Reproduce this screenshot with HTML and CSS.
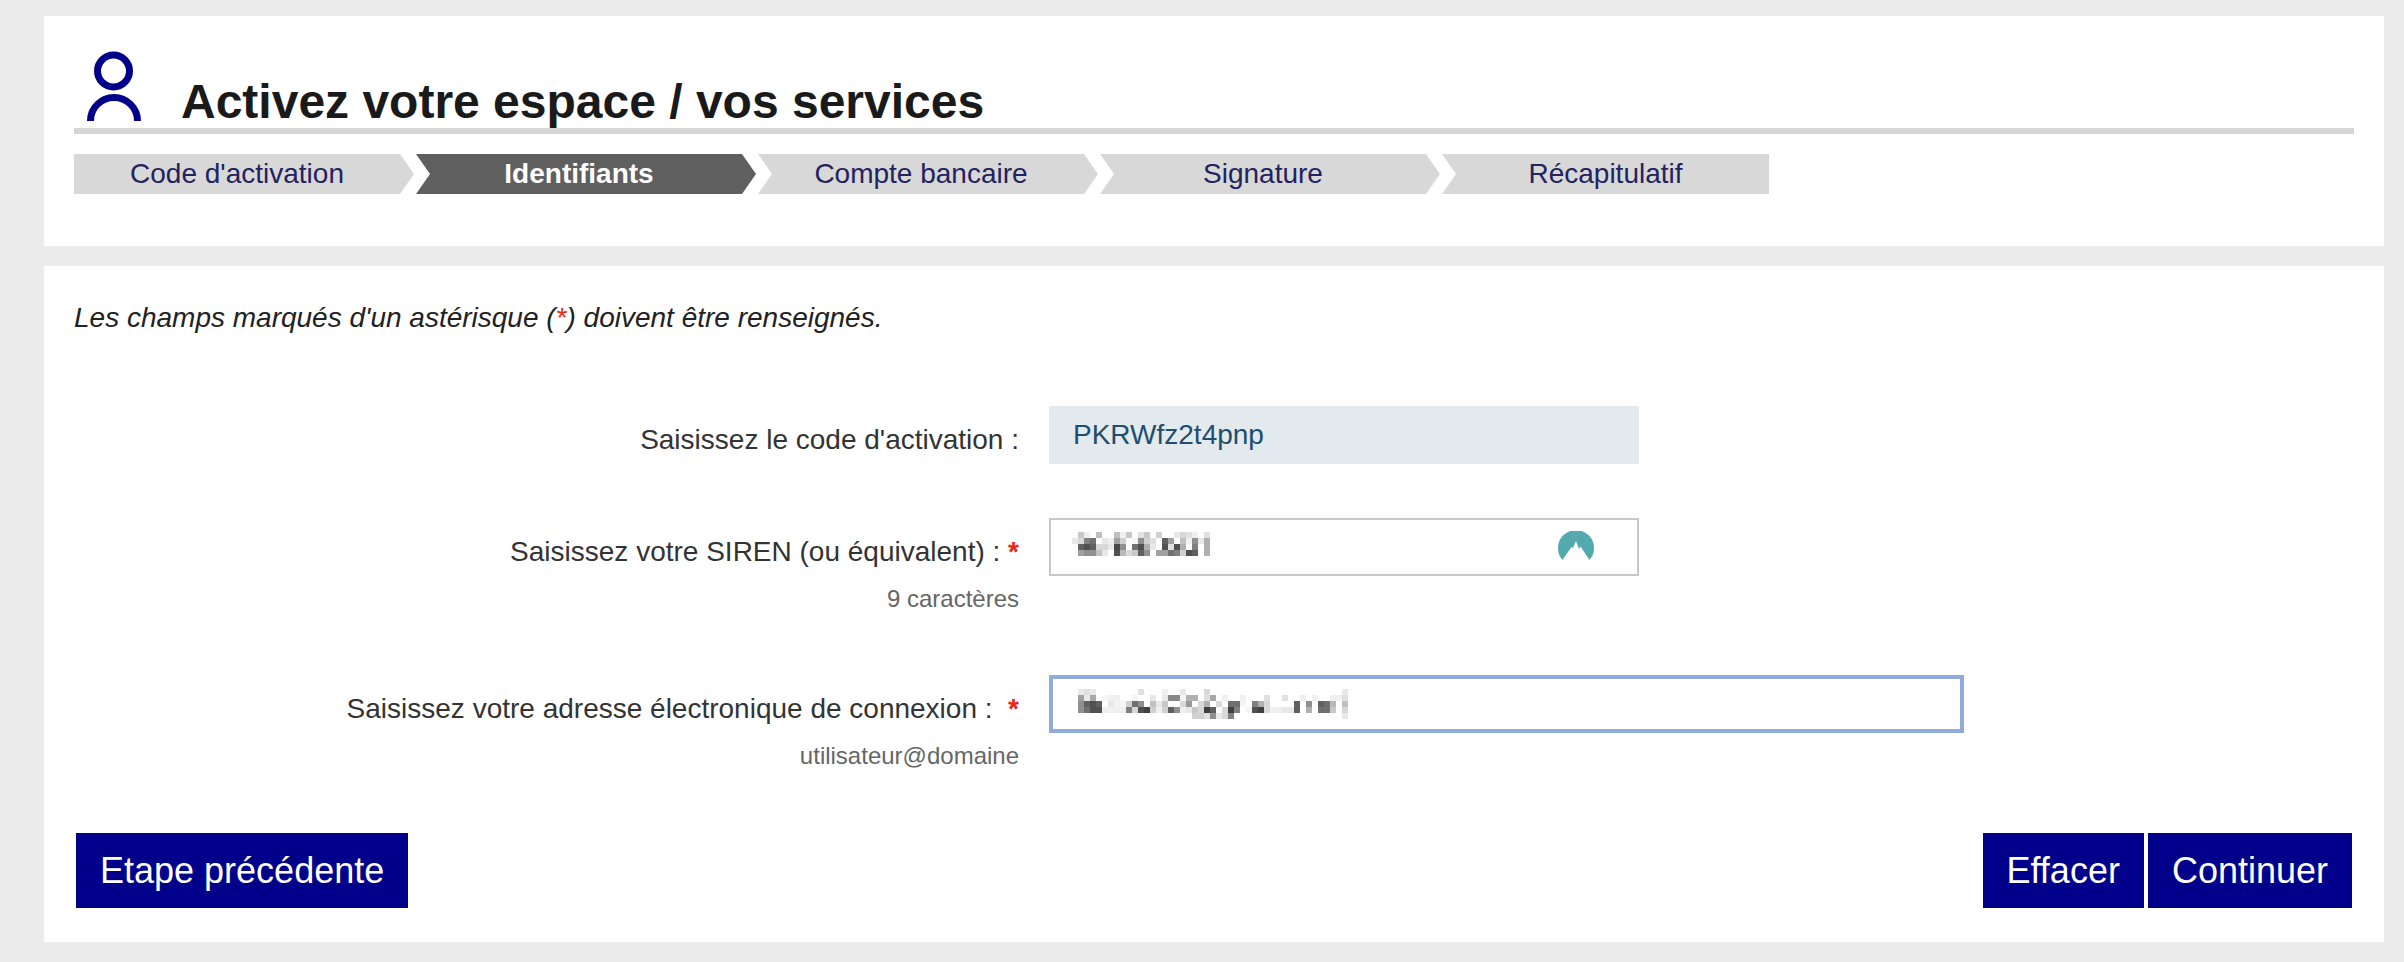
FILE: index.html
```html
<!DOCTYPE html>
<html lang="fr">
<head>
    <meta charset="UTF-8">
    <meta name="viewport" content="width=device-width, initial-scale=1.0">
    <title>Activez votre espace / vos services</title>
    <link rel="stylesheet" href="styles.css">
</head>
<body>
    <div class="panel panel-head">
        <div class="page-title">
            <svg class="user-icon" width="54" height="70" viewBox="0 0 54 70">
                <circle cx="26.5" cy="20" r="16" fill="none" stroke="#00008b" stroke-width="7"/>
                <path d="M3.5 70 A23.5 23.5 0 0 1 50.5 70" fill="none" stroke="#00008b" stroke-width="7"/>
            </svg>
            <h1>Activez votre espace / vos services</h1>
        </div>
        <div class="steps">
            <div class="step step-first">Code d'activation</div>
            <div class="step active">Identifiants</div>
            <div class="step">Compte bancaire</div>
            <div class="step">Signature</div>
            <div class="step step-last">Récapitulatif</div>
        </div>
    </div>

    <div class="panel panel-form">
        <p class="intro">Les champs marqués d'un astérisque (<span class="req">*</span>) doivent être renseignés.</p>

        <div class="form-row row-code">
            <div class="label-col"><label>Saisissez le code d'activation :</label></div>
            <div class="code-box">PKRWfz2t4pnp</div>
        </div>

        <div class="form-row row-siren">
            <div class="label-col">
                <label>Saisissez votre SIREN (ou équivalent) : <span class="req">*</span></label>
                <div class="hint">9 caractères</div>
            </div>
            <div class="field field-siren">
                <!-- valeur masquee dans la capture -->
                <svg class="mosaic" width="138" height="24" viewBox="0 0 23 4">
                    <g>
                        <rect x="1" y="0" fill="#c8c8c8"/><rect x="2" y="0" fill="#f0f0f0"/><rect x="4" y="0" fill="#c0c0c0"/><rect x="7" y="0" fill="#c0c0c0"/><rect x="8" y="0" fill="#f0f0f0"/><rect x="9" y="0" fill="#c8c8c8"/><rect x="11" y="0" fill="#e0e0e0"/><rect x="12" y="0" fill="#c8c8c8"/><rect x="14" y="0" fill="#d0d0d0"/><rect x="17" y="0" fill="#e8e8e8"/><rect x="18" y="0" fill="#d8d8d8"/><rect x="19" y="0" fill="#e0e0e0"/><rect x="20" y="0" fill="#f0f0f0"/><rect x="22" y="0" fill="#e0e0e0"/>
                        <rect x="0" y="1" fill="#e8e8e8"/><rect x="1" y="1" fill="#d8d8d8"/><rect x="2" y="1" fill="#808080"/><rect x="3" y="1" fill="#707070"/><rect x="5" y="1" fill="#e8e8e8"/><rect x="6" y="1" fill="#f0f0f0"/><rect x="7" y="1" fill="#a0a0a0"/><rect x="8" y="1" fill="#d0d0d0"/><rect x="10" y="1" fill="#f5f5f5"/><rect x="11" y="1" fill="#909090"/><rect x="12" y="1" fill="#d0d0d0"/><rect x="13" y="1" fill="#e0e0e0"/><rect x="15" y="1" fill="#606060"/><rect x="16" y="1" fill="#a0a0a0"/><rect x="18" y="1" fill="#c0c0c0"/><rect x="19" y="1" fill="#f0f0f0"/><rect x="20" y="1" fill="#909090"/><rect x="21" y="1" fill="#e8e8e8"/><rect x="22" y="1" fill="#b0b0b0"/>
                        <rect x="1" y="2" fill="#606060"/><rect x="2" y="2" fill="#505050"/><rect x="3" y="2" fill="#606060"/><rect x="4" y="2" fill="#d8d8d8"/><rect x="5" y="2" fill="#d8d8d8"/><rect x="6" y="2" fill="#e8e8e8"/><rect x="7" y="2" fill="#484848"/><rect x="8" y="2" fill="#909090"/><rect x="10" y="2" fill="#707070"/><rect x="11" y="2" fill="#505050"/><rect x="12" y="2" fill="#b0b0b0"/><rect x="13" y="2" fill="#e8e8e8"/><rect x="15" y="2" fill="#505050"/><rect x="16" y="2" fill="#e0e0e0"/><rect x="17" y="2" fill="#505050"/><rect x="18" y="2" fill="#b0b0b0"/><rect x="20" y="2" fill="#808080"/><rect x="22" y="2" fill="#b0b0b0"/>
                        <rect x="1" y="3" fill="#a0a0a0"/><rect x="2" y="3" fill="#909090"/><rect x="3" y="3" fill="#909090"/><rect x="4" y="3" fill="#c0c0c0"/><rect x="5" y="3" fill="#e8e8e8"/><rect x="7" y="3" fill="#505050"/><rect x="8" y="3" fill="#b8b8b8"/><rect x="9" y="3" fill="#d8d8d8"/><rect x="10" y="3" fill="#c8c8c8"/><rect x="11" y="3" fill="#606060"/><rect x="12" y="3" fill="#909090"/><rect x="14" y="3" fill="#a0a0a0"/><rect x="15" y="3" fill="#a0a0a0"/><rect x="16" y="3" fill="#707070"/><rect x="17" y="3" fill="#808080"/><rect x="18" y="3" fill="#d0d0d0"/><rect x="19" y="3" fill="#505050"/><rect x="20" y="3" fill="#606060"/><rect x="22" y="3" fill="#b0b0b0"/>
                    </g>
                </svg>
                <svg class="pass-icon" width="36" height="30" viewBox="0 0 36 30">
                    <path d="M4.5 29 A18 18 0 1 1 31.5 29 L22.5 15.5 L21 18 L18 10 L15 17 L13.5 16 Z" fill="#52a9ae"/>
                </svg>
            </div>
        </div>

        <div class="form-row row-mail">
            <div class="label-col">
                <label>Saisissez votre adresse électronique de connexion :&nbsp; <span class="req">*</span></label>
                <div class="hint">utilisateur@domaine</div>
            </div>
            <div class="field field-mail">
                <svg class="mosaic" width="270" height="30" viewBox="0 0 45 5">
                    <g>
                        <rect x="0" y="0" fill="#e8e8e8"/><rect x="1" y="0" fill="#e0e0e0"/><rect x="2" y="0" fill="#e8e8e8"/><rect x="10" y="0" fill="#e0e0e0"/><rect x="14" y="0" fill="#f0f0f0"/><rect x="17" y="0" fill="#e8e8e8"/><rect x="21" y="0" fill="#d8d8d8"/><rect x="44" y="0" fill="#e8e8e8"/>
                        <rect x="0" y="1" fill="#a0a0a0"/><rect x="1" y="1" fill="#e8e8e8"/><rect x="2" y="1" fill="#a8a8a8"/><rect x="4" y="1" fill="#f5f5f5"/><rect x="5" y="1" fill="#f0f0f0"/><rect x="6" y="1" fill="#f0f0f0"/><rect x="9" y="1" fill="#f5f5f5"/><rect x="12" y="1" fill="#e8e8e8"/><rect x="14" y="1" fill="#e8e8e8"/><rect x="15" y="1" fill="#888888"/><rect x="16" y="1" fill="#888888"/><rect x="17" y="1" fill="#f5f5f5"/><rect x="18" y="1" fill="#b0b0b0"/><rect x="19" y="1" fill="#b0b0b0"/><rect x="21" y="1" fill="#e0e0e0"/><rect x="22" y="1" fill="#a8a8a8"/><rect x="24" y="1" fill="#f0f0f0"/><rect x="27" y="1" fill="#f0f0f0"/><rect x="31" y="1" fill="#e0e0e0"/><rect x="34" y="1" fill="#e0e0e0"/><rect x="37" y="1" fill="#f0f0f0"/><rect x="39" y="1" fill="#f0f0f0"/><rect x="42" y="1" fill="#f0f0f0"/><rect x="43" y="1" fill="#f0f0f0"/><rect x="44" y="1" fill="#e0e0e0"/>
                        <rect x="0" y="2" fill="#909090"/><rect x="1" y="2" fill="#606060"/><rect x="2" y="2" fill="#505050"/><rect x="3" y="2" fill="#606060"/><rect x="5" y="2" fill="#e8e8e8"/><rect x="6" y="2" fill="#f5f5f5"/><rect x="7" y="2" fill="#f5f5f5"/><rect x="8" y="2" fill="#d0d0d0"/><rect x="9" y="2" fill="#707070"/><rect x="10" y="2" fill="#909090"/><rect x="12" y="2" fill="#c0c0c0"/><rect x="13" y="2" fill="#e8e8e8"/><rect x="14" y="2" fill="#c8c8c8"/><rect x="17" y="2" fill="#d8d8d8"/><rect x="18" y="2" fill="#999999"/><rect x="20" y="2" fill="#d8d8d8"/><rect x="21" y="2" fill="#b0b0b0"/><rect x="23" y="2" fill="#d8d8d8"/><rect x="25" y="2" fill="#707070"/><rect x="26" y="2" fill="#707070"/><rect x="27" y="2" fill="#f5f5f5"/><rect x="29" y="2" fill="#808080"/><rect x="30" y="2" fill="#b0b0b0"/><rect x="31" y="2" fill="#d8d8d8"/><rect x="36" y="2" fill="#606060"/><rect x="38" y="2" fill="#909090"/><rect x="40" y="2" fill="#606060"/><rect x="41" y="2" fill="#707070"/><rect x="42" y="2" fill="#b8b8b8"/><rect x="44" y="2" fill="#c0c0c0"/>
                        <rect x="0" y="3" fill="#909090"/><rect x="1" y="3" fill="#707070"/><rect x="2" y="3" fill="#505050"/><rect x="3" y="3" fill="#505050"/><rect x="4" y="3" fill="#f0f0f0"/><rect x="5" y="3" fill="#f0f0f0"/><rect x="6" y="3" fill="#f0f0f0"/><rect x="7" y="3" fill="#f0f0f0"/><rect x="8" y="3" fill="#808080"/><rect x="9" y="3" fill="#d8d8d8"/><rect x="10" y="3" fill="#505050"/><rect x="11" y="3" fill="#404040"/><rect x="12" y="3" fill="#d0d0d0"/><rect x="13" y="3" fill="#f0f0f0"/><rect x="14" y="3" fill="#d0d0d0"/><rect x="15" y="3" fill="#606060"/><rect x="16" y="3" fill="#909090"/><rect x="17" y="3" fill="#f0f0f0"/><rect x="18" y="3" fill="#e8e8e8"/><rect x="19" y="3" fill="#c8c8c8"/><rect x="20" y="3" fill="#d8d8d8"/><rect x="21" y="3" fill="#404040"/><rect x="22" y="3" fill="#606060"/><rect x="24" y="3" fill="#d8d8d8"/><rect x="25" y="3" fill="#404040"/><rect x="26" y="3" fill="#808080"/><rect x="28" y="3" fill="#f5f5f5"/><rect x="29" y="3" fill="#505050"/><rect x="30" y="3" fill="#404040"/><rect x="31" y="3" fill="#d8d8d8"/><rect x="32" y="3" fill="#f0f0f0"/><rect x="33" y="3" fill="#f0f0f0"/><rect x="34" y="3" fill="#e8e8e8"/><rect x="35" y="3" fill="#e8e8e8"/><rect x="36" y="3" fill="#606060"/><rect x="38" y="3" fill="#b0b0b0"/><rect x="40" y="3" fill="#707070"/><rect x="41" y="3" fill="#707070"/><rect x="42" y="3" fill="#c8c8c8"/><rect x="44" y="3" fill="#d8d8d8"/>
                        <rect x="19" y="4" fill="#d0d0d0"/><rect x="20" y="4" fill="#d0d0d0"/><rect x="21" y="4" fill="#e0e0e0"/><rect x="22" y="4" fill="#909090"/><rect x="23" y="4" fill="#e8e8e8"/><rect x="24" y="4" fill="#d8d8d8"/><rect x="25" y="4" fill="#808080"/><rect x="44" y="4" fill="#e8e8e8"/>
                    </g>
                </svg>
            </div>
        </div>

        <div class="actions">
            <button class="btn">Etape précédente</button>
            <div class="actions-right">
                <button class="btn">Effacer</button>
                <button class="btn">Continuer</button>
            </div>
        </div>
    </div>
</body>
</html>
```

FILE: styles.css
```css
* {
    box-sizing: border-box;
}
body {
    font-family: "Liberation Sans", Arial, sans-serif;
    margin: 0;
    padding: 16px 20px 20px 44px;
    background: #ebebeb;
    color: #333;
    font-size: 28px;
}
.panel {
    background: #fff;
}
.panel-head {
    height: 230px;
    padding: 35px 30px 0;
    margin-bottom: 20px;
}
.panel-form {
    height: 676px;
    padding: 0 32px 0 30px;
}
.page-title {
    display: flex;
    align-items: flex-end;
    height: 83px;
    padding-left: 13px;
    border-bottom: 6px solid #d6d6d6;
}
.user-icon {
    display: block;
    margin-right: 40px;
    margin-bottom: 7px;
}
h1 {
    margin: 0 0 2px;
    font-size: 48px;
    line-height: 48px;
    font-weight: bold;
    color: #1a1a1a;
}
.steps {
    display: flex;
    gap: 2px;
    margin-top: 20px;
}
.step {
    width: 340px;
    height: 40px;
    padding-right: 14px;
    background: #d8d8d8;
    color: #23235f;
    font-size: 28px;
    line-height: 40px;
    text-align: center;
    clip-path: polygon(0 0, calc(100% - 14px) 0, 100% 50%, calc(100% - 14px) 100%, 0 100%, 14px 50%);
}
.step-first {
    clip-path: polygon(0 0, calc(100% - 14px) 0, 100% 50%, calc(100% - 14px) 100%, 0 100%);
}
.step-last {
    width: 327px;
    padding-right: 0;
    clip-path: polygon(0 0, 100% 0, 100% 100%, 0 100%, 14px 50%);
}
.step.active {
    background: #5f5f5f;
    color: #fff;
    font-weight: bold;
}
.intro {
    margin: 0;
    padding-top: 36px;
    font-size: 28px;
    line-height: 32px;
    font-style: italic;
    color: #222;
}
.req {
    color: #e8261a;
    font-weight: bold;
}
.intro .req {
    font-weight: normal;
}
.form-row {
    display: grid;
    grid-template-columns: 945px auto;
    column-gap: 30px;
    align-items: start;
}
.row-code {
    margin-top: 72px;
}
.row-siren {
    margin-top: 54px;
}
.row-mail {
    margin-top: 62px;
}
.label-col {
    text-align: right;
    padding-top: 18px;
}
.label-col label {
    display: block;
    line-height: 32px;
}
.hint {
    margin-top: 17px;
    font-size: 24px;
    line-height: 28px;
    color: #666;
}
.code-box {
    width: 590px;
    height: 58px;
    padding-left: 24px;
    background: #e3eaee;
    color: #1f4e70;
    line-height: 58px;
}
.field {
    display: flex;
    align-items: center;
    background: #fff;
}
.field-siren {
    width: 590px;
    height: 58px;
    padding-left: 21px;
    border: 2px solid #c8c8c8;
}
.field-siren .mosaic {
    margin-bottom: 6px;
}
.field-mail {
    width: 915px;
    height: 58px;
    padding-left: 25px;
    border: 4px solid #92abdd;
}
.mosaic {
    display: block;
    shape-rendering: crispEdges;
}
.mosaic rect {
    width: 1px;
    height: 1px;
}
.pass-icon {
    display: block;
    margin-left: auto;
    margin-right: 43px;
    margin-top: -2px;
}
.actions {
    display: flex;
    justify-content: space-between;
    margin-top: 63px;
    padding-left: 2px;
}
.actions-right {
    display: flex;
    gap: 4px;
}
.btn {
    height: 75px;
    padding: 0 24px;
    border: 0;
    background: #00008b;
    color: #fff;
    font-family: "Liberation Sans", Arial, sans-serif;
    font-size: 36px;
}
```
